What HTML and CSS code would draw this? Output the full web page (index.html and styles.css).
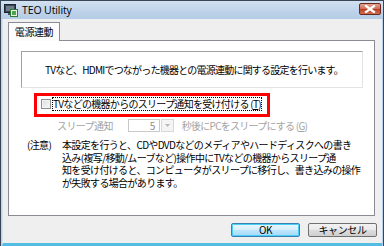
FILE: index.html
```html
<!DOCTYPE html>
<html lang="ja">
<head>
<meta charset="utf-8">
<link rel="stylesheet" href="styles.css">
</head>
<body>
<div class="window">
  <div class="titlebar">
    <svg class="app-icon" width="14" height="13" viewBox="0 0 14 13">
      <rect x="0.5" y="0.5" width="11" height="8" fill="#3b4450" stroke="#1e242c"/>
      <rect x="2" y="2" width="8" height="5" fill="#6f7c8c"/>
      <rect x="4" y="9" width="4" height="2" fill="#4a525c"/>
      <rect x="6.5" y="5.5" width="7" height="7" fill="#e9f3e4" stroke="#2f7a3a"/>
      <rect x="8" y="7" width="4" height="4" fill="#4aa54e"/>
    </svg>
    <span class="title">TEO Utility</span>
    <div class="close">
      <svg width="12" height="8" viewBox="0 0 12 8">
        <path d="M2 1 L10 7 M10 1 L2 7" stroke="#fff" stroke-width="2.2" stroke-linecap="square"/>
      </svg>
    </div>
  </div>
  <div class="client">
    <div class="tabs"><div class="tab">電源連動</div></div>
    <div class="panel">
      <div class="desc">TVなど、HDMIでつながった機器との電源連動に関する設定を行います。</div>
      <div class="highlight">
        <div class="check">
          <span class="box"></span>
          <span class="focus">TVなどの機器からのスリープ通知を受け付ける (<u>T</u>)</span>
        </div>
      </div>
      <div class="sleeprow">
        <span class="lbl">スリープ通知</span>
        <span class="combo"><span class="val">5</span><span class="drop"><svg width="5" height="3" viewBox="0 0 5 3"><path d="M0 0 H5 L2.5 3 Z" fill="#b8b8b8"/></svg></span></span>
        <span class="lbl2">秒後にPCをスリープにする (<u>G</u>)</span>
      </div>
      <div class="note">
        <span class="note-head">(注意)</span>
        <p class="note-body">本設定を行うと、CDやDVDなどのメディアやハードディスクへの書き<br>込み(複写/移動/ムーブなど)操作中にTVなどの機器からスリープ通<br>知を受け付けると、コンピュータがスリープに移行し、書き込みの操作<br>が失敗する場合があります。</p>
      </div>
    </div>
    <div class="footer">
      <button class="btn default">OK</button>
      <button class="btn">キャンセル</button>
    </div>
  </div>
</div>
</body>
</html>
```
FILE: styles.css
```css
html, body {
  margin: 0;
  padding: 0;
  background: #b9d1ea;
}
body {
  width: 384px;
  height: 246px;
  overflow: hidden;
  font-family: "Noto Sans CJK JP", "Noto Sans", sans-serif;
  font-size: 10px;
  color: #000;
}
.window {
  box-sizing: border-box;
  width: 384px;
  height: 246px;
  border: 1px solid #3a4656;
  border-bottom: none;
  background: #b9d1ea;
  display: flex;
  flex-direction: column;
}
.titlebar {
  height: 18px;
  flex: none;
  display: flex;
  align-items: center;
  padding-left: 3px;
  background: linear-gradient(#d2e1f1, #bdd2e9 60%, #b5cce6);
}
.app-icon { flex: none; }
.title {
  margin-left: 4px;
  font-family: "Open Sans", "Noto Sans", sans-serif;
  font-size: 10.5px;
  color: #000;
  letter-spacing: -0.1px;
}
.close {
  margin-left: auto;
  margin-right: 2px;
  width: 22px;
  height: 12px;
  box-sizing: border-box;
  border: 1px solid #6b2a20;
  border-radius: 2px;
  background: linear-gradient(#e3a58f, #cf6a4f 50%, #b9412b 55%, #d36d4f);
  display: flex;
  align-items: center;
  justify-content: center;
  margin-top: -2px;
}
.client {
  flex: 1;
  margin: 0 1px;
  border-left: 1px solid #d5e3f1;
  background: #efefef;
  display: flex;
  flex-direction: column;
  padding: 3px 5px 0 5px;
  border-bottom: 3px solid #52bde0;
}
.tabs {
  display: flex;
  height: 18px;
}
.tab {
  box-sizing: border-box;
  width: 52px;
  height: 19px;
  border: 1px solid #898c95;
  border-bottom: none;
  background: #fcfcfc;
  display: flex;
  align-items: center;
  justify-content: center;
  position: relative;
  z-index: 1;
  padding-bottom: 1px;
  letter-spacing: -0.4px;
}
.panel {
  box-sizing: border-box;
  width: 367px;
  height: 176px;
  border: 1px solid #898c95;
  background: #fff;
  display: flex;
  flex-direction: column;
}
.desc {
  box-sizing: border-box;
  margin: 10px 11px 0 12px;
  height: 37px;
  border: 1px solid;
  border-color: #a0a0a0 #e3e3e3 #e3e3e3 #a0a0a0;
  display: flex;
  align-items: center;
  padding-left: 23px;
  letter-spacing: -0.78px;
}
.highlight {
  box-sizing: border-box;
  margin: 5px 0 0 25px;
  width: 236px;
  height: 24px;
  border: 3px solid #ff0000;
  padding: 2px 0 0 4px;
}
.check {
  display: flex;
  align-items: center;
}
.box {
  box-sizing: border-box;
  width: 10px;
  height: 10px;
  border: 1px solid #8e8f8f;
  background: linear-gradient(135deg, #dcdcdc, #fafafa);
  box-shadow: inset 0 0 0 1px #f4f4f4;
  flex: none;
}
.focus {
  margin-left: 2px;
  outline: 1px dotted #000;
  outline-offset: 0;
  line-height: 12px;
  letter-spacing: -0.7px;
  white-space: nowrap;
}
.sleeprow {
  display: flex;
  align-items: center;
  margin: 1px 0 0 48px;
  height: 14px;
  color: #a3a3a3;
  letter-spacing: -0.6px;
}
.combo {
  display: flex;
  margin-left: 15px;
  height: 13px;
}
.val {
  box-sizing: border-box;
  width: 32px;
  height: 13px;
  border: 1px solid #c9c9c9;
  text-align: right;
  padding-right: 4px;
  line-height: 11px;
  color: #8a8a8a;
}
.drop {
  box-sizing: border-box;
  width: 13px;
  height: 13px;
  margin-left: 1px;
  border: 1px solid #d8d8d8;
  background: #f4f4f4;
  display: flex;
  align-items: center;
  justify-content: center;
}
.lbl2 {
  margin-left: 8px;
  letter-spacing: -0.75px;
}
.note {
  display: flex;
  margin: 7px 0 0 18px;
  letter-spacing: -0.65px;
}
.note-head {
  width: 35px;
  flex: none;
  line-height: 12.5px;
}
.note-body {
  margin: 0;
  line-height: 12.5px;
  white-space: nowrap;
}
.footer {
  display: flex;
  justify-content: flex-end;
  gap: 8px;
  margin-top: 7px;
  padding-right: 0;
}
.btn {
  box-sizing: border-box;
  width: 69px;
  height: 14px;
  padding: 0;
  margin: 0;
  border: 1px solid #707070;
  border-radius: 2px;
  background: linear-gradient(#f2f2f2, #ebebeb 45%, #dddddd 50%, #cfcfcf);
  font-family: "Noto Sans CJK JP", "Noto Sans", sans-serif;
  font-size: 10px;
  line-height: 12px;
  color: #000;
  letter-spacing: -0.4px;
}
.btn.default {
  border-color: #3c7fb1;
  background: linear-gradient(#eaf6fd, #d9f0fc 45%, #bee6fd 50%, #a7d9f5);
  box-shadow: inset 0 0 0 1px #48d0f8;
}
```
